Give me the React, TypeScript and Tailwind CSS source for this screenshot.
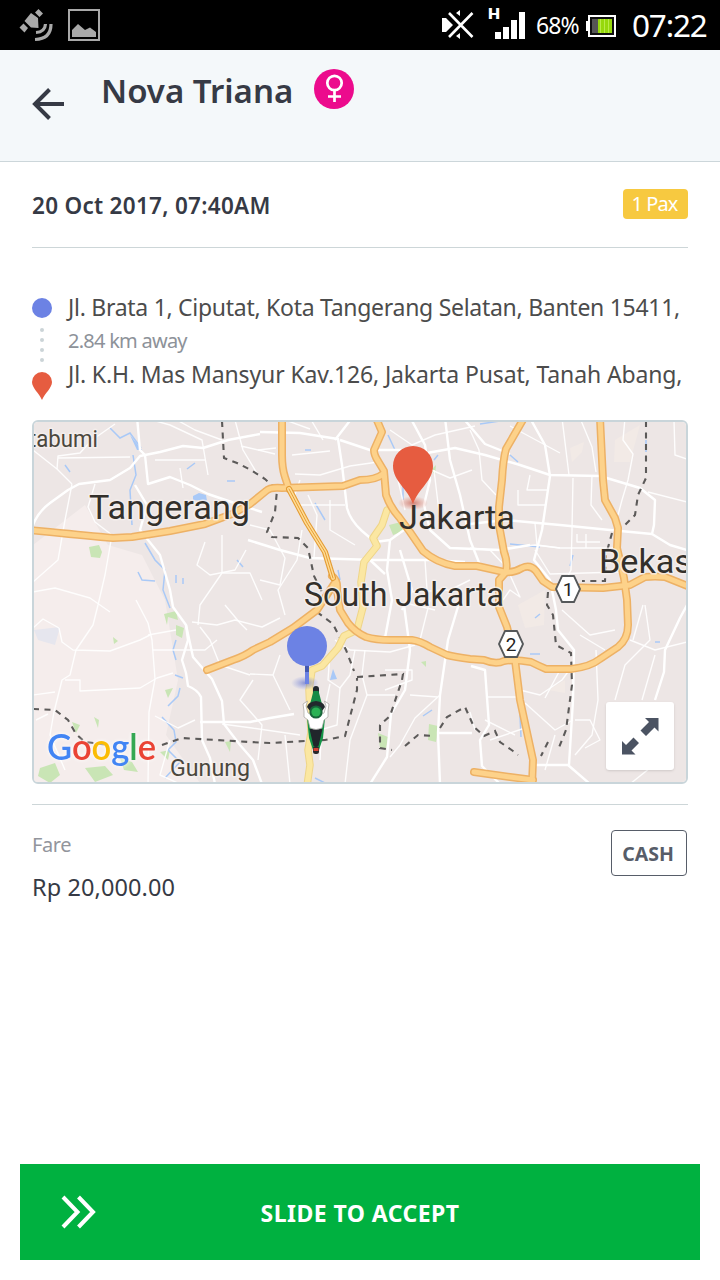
import React from "react";

const highways = [
  "M30 530 L50 532 Q90 536 113 538 L132 537 L170 531 L205 524 L232 514 L250 504 L266 491 Q270 487 282 488 L343 486 L360 480 Q376 480 383 474",
  "M282 418 V455 Q282 468 285 477 L289 489",
  "M207 670 L233 660 Q245 656 253 650 L270 642 L293 628 L317 610 L334 584",
  "M332 576 Q338 580 337 590 L340 610 L348 623 Q355 632 366 637 Q376 640 390 640 H412 Q420 641 430 647 L447 655 Q455 657 470 659 L484 660 Q496 665 504 661 Q515 659 531 662 Q539 666 546 669 H571 Q590 667 600 659 L618 647 Q628 639 628 625 L627 600 L624 578 L617 548 L618 528 L615 518 L605 500 L603 480 L600 418",
  "M376 418 L382 432 L374 450 Q374 455 378 461 L384 471 L386 495 Q390 507 399 517 L410 532 L423 551 Q437 563 455 566 L477 566 L504 572 Q514 573 522 568 Q530 564 536 571 L543 581 L552 587 L603 588 L630 585 L645 577 Q655 576 665 577 L690 587",
  "M524 418 L506 449 Q503 460 502 480 L499 507 L499 525 L504 552 Q508 562 506 572 L499 580 L499 607 L507 627 L515 660 L520 700 L533 760 L532 785",
  "M474 772 L510 777 L533 780",
];

const mainRoads = [
  "M33 525 Q38 512 50 503 L68 490 L79 484 L110 480 L130 468 L140 456 L160 452 L183 446 L203 448 L228 440 L260 434",
  "M137 417 L140 450 L145 455 L148 484 L170 477 L190 485 L208 494 L240 505 L262 512",
  "M135 485 L147 505 L140 530 L160 555 L170 590 L173 607 L186 625 L188 640 L182 660 L186 673 L188 686 Q198 690 201 697 L202 740 L210 758 L215 784",
  "M186 625 L193 657 L212 679 L222 701 L224 724 L240 745 L253 760 L262 784",
  "M200 722 H250 L270 718 L294 714",
  "M260 432 L300 433 L338 439 L342 465 L347 508 Q350 520 362 531 L375 542 L390 540 L404 530",
  "M248 540 L280 550 L310 558 L374 560 H430 L465 562",
  "M352 418 L335 440 M340 440 L370 450 H406",
  "M410 417 L425 445 L430 480 L424 505 L430 530 L450 548 L500 550 L530 545",
  "M410 456 L455 448 L485 455 L520 465 L550 475 L600 476 L640 488 L655 500 L654 525 L652 534 L670 545 L687 550",
  "M470 524 L505 520 L560 525 L610 530 L652 534",
  "M445 418 L450 460 L460 495 L470 540 L480 565",
  "M463 418 L485 444 L510 454",
  "M530 418 L545 445 L550 476 L542 530 L534 560 L550 580 L556 610 L558 630 L574 650 L573 700 L569 765",
  "M460 600 L448 640 L440 695 L438 733 L440 784",
  "M687 605 L680 618 L665 650 L664 672 L655 700",
  "M438 733 H472",
  "M390 540 L387 570 L392 600 L385 638",
  "M404 605 L410 650 L405 690 L391 714 L387 757 L370 784",
  "M471 666 L485 670 L489 725 L480 740 L482 766 L500 784",
  "M533 765 H568 L590 784",
  "M370 560 L385 574 M400 550 L412 590 L402 610",
];

const minorRoads = [
  "M33 450 L57 469 L72 484 M72 484 L65 520 L58 560 L33 582",
  "M33 592 L55 588 L90 598 L110 612",
  "M57 469 L58 456 L80 453 L92 440 L115 424 M58 458 L130 457",
  "M95 484 L88 507 L95 522 L112 535 L105 575 L98 605",
  "M145 418 L170 425 L202 440 L208 475 M155 460 H205 M180 468 L183 488",
  "M177 420 L195 430 L222 440",
  "M205 542 L197 565 L210 575 L235 570 L246 550",
  "M222 535 V573 L200 605 L198 625 M222 573 H250 L262 600",
  "M98 605 L93 625 L76 650 L70 675 L62 680 L54 712 L50 735 L65 770",
  "M33 628 L43 619 L59 628 L62 642 L73 650 L110 651 L140 640 L150 635",
  "M136 600 L148 623 L152 640 L155 679 L149 712 L148 784",
  "M65 680 H80 V691 L140 688 L157 678 L173 673",
  "M33 695 L55 692 M36 720 L48 714",
  "M153 650 L205 650 L217 640 M148 635 L176 630",
  "M200 627 L210 640 L220 665 L250 675",
  "M192 622 L217 625 L235 620 L262 627 L280 618",
  "M225 605 L240 623 L247 630",
  "M235 420 L243 450 L258 475 M241 446 L275 454",
  "M258 450 L276 448 M292 455 L330 451 M295 474 L320 475 L350 466 L378 462",
  "M293 500 L300 480 M295 505 H345 M308 495 L317 515 L314 557",
  "M330 500 L330 530 L355 545",
  "M302 530 L297 560 L278 590 L285 615",
  "M250 525 L270 530 L285 558 L280 585 L260 580",
  "M310 418 L323 440 M288 421 L310 429",
  "M390 430 L412 445 L435 435 L475 426",
  "M403 455 L398 480 L405 510 M420 465 L450 478 L472 470",
  "M470 430 L479 450 L482 480 L496 495 M434 470 L440 520",
  "M510 426 L560 453 M562 418 L569 475 M580 418 L592 447 L596 472",
  "M625 418 L623 440 L633 454 L628 480 L622 500 L618 515",
  "M674 420 L675 455 L687 459 M648 492 L687 502",
  "M573 478 L572 530 L571 570 L565 582 M530 475 L527 490 H547 M518 490 V505 H546",
  "M592 475 L591 505 L602 520 M535 523 L537 545 L560 548 H615",
  "M577 534 V542 H600 M586 534 V548",
  "M507 548 L535 545 L560 548 M507 568 L490 550 L470 548",
  "M535 550 L550 574 L620 572",
  "M510 575 L520 597 L510 590 L503 600",
  "M410 592 L450 590 L470 580 M425 560 L427 590",
  "M405 603 L435 610 M430 600 L420 640",
  "M335 640 L350 650 L390 652 L415 645",
  "M330 652 L328 680 L340 688 L350 675 L355 650",
  "M365 650 L362 675 L367 695 L350 740 L345 784",
  "M367 695 H395 M385 670 H412 V680 L385 690",
  "M440 695 L415 718 L400 745 L390 757 M438 697 L410 695",
  "M250 674 L273 675 L290 710 M273 675 L280 655",
  "M222 724 L252 728 L300 735 M285 735 L290 784",
  "M253 680 L240 700 L262 725 L258 760",
  "M330 684 L322 720 L320 760 M340 688 L337 725 L310 733",
  "M562 610 L590 635 L615 630 M580 635 L605 650",
  "M630 640 L655 650 L687 642 M645 605 L650 640 L625 665 L615 700",
  "M596 650 L598 700 L592 735 L575 755",
  "M520 690 L540 695 L562 680 L573 665 M525 703 L555 730 L573 720",
  "M487 697 H518 M485 720 L515 735 M490 740 L525 728",
  "M575 720 L590 720 L600 740 L585 748",
  "M555 735 L545 770 M560 670 L545 698",
  "M643 605 L633 640 M655 655 L642 700",
  "M630 784 L660 760 M470 712 L475 730",
  "M155 716 L178 728 L195 720 M170 740 L160 775 L180 784",
];

const borders = [
  "M222 421 L224 458 L237 463 L251 470 L265 479 L277 490 L275 512 L267 532 L272 537 L298 538 L308 548 L314 576 L322 592",
  "M33 709 L55 710 L68 720 L76 734 L85 742 L110 745",
  "M162 745 L182 738 L250 742 L270 743 L305 741 L325 740 L345 736 L351 713 L357 690 L357 678",
  "M317 612 L333 624 L346 650 L354 671 M357 677 L403 674 L402 680 L390 716 L380 725 L380 748 L392 750",
  "M405 746 L418 735 L435 736 M440 728 L447 717 L465 707 L474 727 L484 736 L495 731 L500 742 L513 751 L518 755",
  "M646 421 V478 L638 495 L635 515 L623 527 M612 533 L606 555 L605 581 H582",
  "M548 592 L547 605 L553 615 L556 645 L571 653 L572 685 L566 730 L558 750 M548 742 L541 756",
];

const rivers = [
  "M110 428 L120 438 L130 433 L141 448 M133 455 L136 475 L130 490 L132 525",
  "M145 543 L155 560 L165 570 L163 590 L170 608",
  "M176 640 L173 650 L176 660 M175 675 L183 678 M180 688 L178 696 L168 706 M162 717 L174 730 L176 742 L168 750 L180 762 L165 778",
  "M388 435 L395 450 M403 485 V500 M510 455 L518 462 M480 424 L500 421",
  "M646 440 V452 M510 544 L540 547 M573 555 L570 566",
  "M138 572 L142 580 L155 581 M65 465 L70 472 M195 463 L187 469 M227 481 H235 M237 560 L243 567",
  "M423 716 L432 710 M530 654 H540 M535 618 L540 614 M655 642 H660",
  "M176 575 V583 M183 578 V584 M315 778 L325 783 M520 715 L521 737",
  "M305 450 H311 M315 503 L325 520 M338 570 L340 580 M370 450 L378 448 M434 460 L438 455",
];

const parks = [
  "M89 547 L99 545 L102 552 L100 558 L91 557Z",
  "M164 614 L176 611 L178 620 L168 617 L167 625Z",
  "M176 625 L184 628 L182 638 L176 635Z",
  "M389 525 L401 522 L404 531 L393 535Z",
  "M431 470 L436 465 L435 475Z",
  "M378 733 L388 737 L386 748 L380 748Z",
  "M429 724 L438 726 L436 742 L428 740Z",
  "M113 637 L118 641 L114 644Z",
  "M40 768 L55 763 L60 775 L50 783 L38 776Z",
  "M85 768 L105 766 L113 775 L95 782Z",
  "M72 722 L80 725 L76 733Z",
  "M94 717 L99 720 L98 728Z",
  "M160 752 L170 750 L168 760Z",
  "M120 758 L132 762 L138 772 L124 770Z",
  "M165 690 L173 688 L168 698Z",
  "M225 742 L231 741 L230 752Z",
  "M421 662 L426 661 L426 667Z",
];

const yellowRoad =
  "M387 510 L382 525 L373 538 L377 546 L364 562 L361 582 L363 607 L357 630 L344 636 L338 648 L322 666 L312 670 L309 690 L311 733 L308 750 L310 765 L307 786";
const toll = "M289 489 L307 523 L325 552 L333 578";

function MapView() {
  return (
    <svg className="block h-full w-full" viewBox="34 422 652 360" preserveAspectRatio="none" fontFamily="Roboto, sans-serif">
      <defs>
        <radialGradient id="redShade">
          <stop offset="0" stopColor="#b8402e" stopOpacity=".6" />
          <stop offset="1" stopColor="#e65c40" stopOpacity="0" />
        </radialGradient>
        <radialGradient id="blueShade">
          <stop offset="0" stopColor="#5868c8" stopOpacity=".65" />
          <stop offset="1" stopColor="#6c82e4" stopOpacity="0" />
        </radialGradient>
      </defs>
      <path d="M33 421 H687 V783 H33Z" fill="#ede6e5" />
      <path d="M33 545 L85 505 L108 545 L142 555 L165 600 L178 680 L166 735 L200 783 H33Z" fill="#f5edec" />
      <path d="M615 440 L640 425 L630 462 L614 462Z M570 448 L584 442 L582 452 L572 462Z M518 605 L545 590 L544 625 L525 628Z M548 690 L565 680 L565 693Z" fill="#f2eae6" />
      <path d="M34 630 L60 627 L55 645 L38 640Z" fill="#e6e6ee" />
      <g fill="#c9e5b5">{parks.map((d) => <path key={d} d={d} />)}</g>
      <g fill="none" stroke="#a9c9f7" strokeWidth="1.5">{rivers.map((d) => <path key={d} d={d} />)}</g>
      <path d="M193 496 L199 493 L206 495 L207 501 L193 500Z M330 680 L333 669 L337 679Z M130 435 L142 450 L137 450Z" fill="#a9c9f7" />
      <g fill="none" stroke="#fff" strokeLinejoin="round">
        <g strokeWidth="1.4" strokeOpacity=".9">{minorRoads.map((d) => <path key={d} d={d} />)}</g>
        <g strokeWidth="2.4">{mainRoads.map((d) => <path key={d} d={d} />)}</g>
      </g>
      <g fill="none" stroke="#5c5a59" strokeWidth="2.1" strokeDasharray="6 5.500">{borders.map((d) => <path key={d} d={d} />)}</g>
      <g fill="none" strokeLinejoin="round" strokeLinecap="round">
        <path d={yellowRoad} stroke="#efd588" strokeWidth="7.5" />
        <path d={yellowRoad} stroke="#fbe7a2" strokeWidth="5.5" />
        <g stroke="#edb165" strokeWidth="8">{highways.map((d) => <path key={d} d={d} />)}</g>
        <g stroke="#fdd28a" strokeWidth="5">{highways.map((d) => <path key={d} d={d} />)}</g>
        <path d={toll} stroke="#e49c35" strokeWidth="6" />
        <path d={toll} stroke="#ffdc95" strokeWidth="3.8" />
        <path d={toll} stroke="#e49c35" strokeWidth="1" />
      </g>
      <g fill="#33302b" stroke="#f6f1ef" strokeWidth="3" strokeOpacity=".8" paintOrder="stroke" strokeLinejoin="round">
        <g fontSize="34">
          <text x="89" y="519" textLength="161" lengthAdjust="spacingAndGlyphs">Tangerang</text>
          <text x="304" y="606" textLength="200" lengthAdjust="spacingAndGlyphs">South Jakarta</text>
          <text x="599" y="573" textLength="93" lengthAdjust="spacingAndGlyphs">Bekas</text>
        </g>
        <g fontSize="24" fill="#4b473d">
          <text x="29" y="447" textLength="69" lengthAdjust="spacingAndGlyphs">tabumi</text>
          <text x="170" y="776" textLength="80" lengthAdjust="spacingAndGlyphs">Gunung</text>
        </g>
      </g>
      <ellipse cx="413" cy="503" rx="15" ry="7" fill="url(#redShade)" />
      <path d="M413 504 C408 489 393 481 393 466 A20 20 0 0 1 433 466 C433 481 418 489 413 504Z" fill="#e65c40" />
      <text x="399" y="529" fontSize="34" textLength="116" lengthAdjust="spacingAndGlyphs" fill="#33302b">Jakarta</text>
      {[{ x: 568, y: 589, n: "1" }, { x: 511, y: 644, n: "2" }].map((s) => (
        <g key={s.n} transform={`translate(${s.x} ${s.y})`}>
          <path d="M-12 0 L-6 -13 H6 L12 0 L6 13 H-6Z" fill="#fff" stroke="#55585a" strokeWidth="1.8" strokeLinejoin="round" />
          <text y="7" fontSize="19" textAnchor="middle" fill="#222">{s.n}</text>
        </g>
      ))}
      <ellipse cx="305" cy="683" rx="14" ry="7" fill="url(#blueShade)" />
      <path d="M307 660 V684" stroke="#6c82e4" strokeWidth="4" />
      <path d="M307 665 V672" stroke="#4358ae" strokeWidth="4" />
      <circle cx="307" cy="646" r="20" fill="#6c82e4" />
      <g>
        <rect x="313" y="686" width="6" height="14" rx="3" fill="#22282d" />
        <path d="M313.500 691 H318.500 L322 704 H310Z" fill="#168a45" />
        <path d="M307 707 Q308 702 316 701 Q324 702 325 707 L322 711 H310Z" fill="#22282d" />
        <path d="M307 718 L309 738 L313 750 H319 L323 738 L325 718Z" fill="#149447" />
        <path d="M309.500 729 L313.500 746 H318.500 L322.500 729Z" fill="#20262b" />
        <rect x="313" y="746" width="6" height="8" rx="2.500" fill="#28282b" />
        <path d="M313.500 748 H318.500 V751 H313.500Z" fill="#d24234" />
        <path d="M307.500 701 L303 704 L304 711 L304 717 L308 720 L310 728 Q316 731 322 728 L324 720 L328 717 L328 711 L329 704 L324.500 701 L326 706 L324 713 L320 715 H312 L308 713 L306 706Z" fill="#fff" stroke="#a5a09e" strokeWidth=".7" />
        <circle cx="316" cy="712" r="6.6" fill="#17653a" />
        <circle cx="316" cy="712" r="4.6" fill="#2ab254" />
      </g>
      <text className="drop-shadow-[0_0_2px_#fff]" x="47" y="760" fontFamily="Lato, sans-serif" fontWeight="600" fontSize="37" textLength="109" lengthAdjust="spacingAndGlyphs">
        <tspan fill="#4285f4">G</tspan><tspan fill="#ea4335">o</tspan><tspan fill="#fbbc05">o</tspan><tspan fill="#4285f4">g</tspan><tspan fill="#34a853">l</tspan><tspan fill="#ea4335">e</tspan>
      </text>
    </svg>
  );
}

function StatusBar() {
  return (
    <div className="flex h-[50px] items-center bg-black pl-[19px] text-white">
      <svg className="h-[36px] w-[34px] shrink-0" viewBox="19 7 34 36" fill="#a9a9a9">
        <path d="M38.500 9 L43 13.500 L39.500 17 L35 12.500Z M31 13 L38 18 L38.500 28 L31 27.500 L24.500 21Z M23.500 23.500 L28 28 L24.500 32.500 L19.500 27.500Z" />
        <path d="M36 32.500 Q45 32 45.500 24 M35 39.500 Q51 39 51 24" fill="none" stroke="#a9a9a9" strokeWidth="3.200" />
      </svg>
      <svg className="ml-[13px] h-[36px] w-[36px] shrink-0" viewBox="66 7 36 36">
        <rect x="69" y="10" width="30" height="30" fill="none" stroke="#a9a9a9" strokeWidth="2" />
        <path d="M72 37 V30 L78 24 L85 30 L90 27.500 L96 32 V37Z" fill="#a9a9a9" />
      </svg>
      <svg className="ml-[339px] h-[36px] w-[34px] shrink-0" viewBox="441 7 34 36">
        <path d="M442 18 H446 L453 25 L446 32 H442Z M456 13 L460 10 V16Z M456 36 L460 33 V39Z" fill="#fff" />
        <path d="M449 13 L472.500 37 M472.500 13 L449 37" stroke="#fff" strokeWidth="2.600" />
      </svg>
      <svg className="ml-[12px] h-[36px] w-[40px] shrink-0" viewBox="487 7 40 36">
        <path d="M495 39 V32 H501 V39Z M503 39 V27 H509 V39Z M511 39 V20 H517 V39Z M519 39 V12 H525 V39Z" fill="#fff" />
        <text x="488" y="19" fontSize="14" fontWeight="900" fontFamily="Roboto, sans-serif" textLength="12" lengthAdjust="spacingAndGlyphs" fill="#fff">H</text>
      </svg>
      <span className="ml-[9px] mt-px w-[44px] whitespace-nowrap text-[23px] leading-[49px] tracking-[-0.9px]">68%</span>
      <svg className="ml-[6px] mt-[2px] h-[24px] w-[30px] shrink-0" viewBox="586 14 30 24">
        <rect x="589" y="16" width="26" height="20" fill="#101010" stroke="#fff" strokeWidth="2" />
        <path d="M586 21 H588 V31 H586Z" fill="#fff" />
        <path d="M592 19 H598 V33 H592Z" fill="#555" />
        <path d="M598 19 H612 V33 H598Z" fill="#96d80c" />
        <path d="M600.500 19 V33 M604.500 19 V33 M608.500 19 V33" stroke="#b9ec4a" strokeWidth="1" />
      </svg>
      <span className="ml-[16px] w-[77px] whitespace-nowrap text-[31.5px] leading-[50px] tracking-[-1.2px]">07:22</span>
    </div>
  );
}

export default function App() {
  return (
    <div className="flex h-[1280px] w-[720px] flex-col overflow-hidden bg-white font-['Noto_Sans',sans-serif] text-[#363a45]">
      <StatusBar />
      <header className="flex h-[112px] items-start border-b border-[#ccd6da] bg-[#f4f8fa]">
        <svg className="ml-[30px] mt-[36px] h-[36px] w-[36px] shrink-0" viewBox="30 86 36 36" fill="none" stroke="#363a45" strokeWidth="4">
          <path d="M64 104 H35 M49.500 89.500 L35 104 L49.500 118.500" />
        </svg>
        <h1 className="ml-[35px] mt-[17px] w-[213px] whitespace-nowrap text-[33px] font-semibold leading-[48px]">Nova Triana</h1>
        <svg className="mt-[19px] h-[40px] w-[40px] shrink-0" viewBox="0 0 40 40" fill="none" stroke="#fff" strokeWidth="2.700">
          <circle cx="20" cy="20" r="20" fill="#ec0b8d" stroke="none" />
          <circle cx="20.500" cy="14" r="7.200" />
          <path d="M20.500 21 V33 M14 27.500 H27" />
        </svg>
      </header>
      <main className="flex flex-1 flex-col px-8">
        <section className="flex h-[86px] items-center justify-between border-b border-[#cdd6d8]">
          <span className="whitespace-nowrap pt-[2px] text-[22.5px] font-semibold tracking-[0.29px]">20 Oct 2017, 07:40AM</span>
          <span className="mb-[2px] flex h-[30px] w-[65px] items-center justify-center rounded bg-[#f7c940] pr-[2px] pt-px text-[20px] tracking-[-0.9px] text-white">1 Pax</span>
        </section>
        <section className="mt-[42px] flex h-[130px]">
          <svg className="h-[112px] w-[20px] shrink-0" viewBox="32 290 20 112">
            <circle cx="42" cy="308" r="10" fill="#6c82e4" />
            <g fill="#cbd4d7">
              <circle cx="42" cy="330" r="2" />
              <circle cx="42" cy="340" r="2" />
              <circle cx="42" cy="350" r="2" />
              <circle cx="42" cy="360" r="2" />
            </g>
            <path d="M42 400 C39 393 32 388 32 382 A10 10 0 0 1 52 382 C52 388 45 393 42 400Z" fill="#e65c40" />
          </svg>
          <div className="ml-4 whitespace-nowrap text-[23px] text-[#4c4c4c]">
            <p className="leading-[34px] tracking-[-0.28px]">Jl. Brata 1, Ciputat, Kota Tangerang Selatan, Banten 15411,</p>
            <p className="text-[20px] leading-[33px] tracking-[-0.75px] text-[#8d9299]">2.84 km away</p>
            <p className="leading-[34px] tracking-[-0.13px]">Jl. K.H. Mas Mansyur Kav.126, Jakarta Pusat, Tanah Abang,</p>
          </div>
        </section>
        <section className="relative h-[364px] overflow-hidden rounded-md border-2 border-[#c9d5da]">
          <MapView />
          <button className="absolute bottom-[12px] right-[12px] flex h-[68px] w-[68px] items-center justify-center rounded-[3px] bg-white shadow">
            <svg className="h-[40px] w-[40px]" viewBox="0 0 40 40" fill="#4b5362">
              <path d="M25 2 H38.500 V15.500 L34.500 11.500 L26 20 L20.500 14.500 L29 6Z M2 25 L6 29 L13.500 21.500 L19 27 L11.500 34.500 L15.500 38.500 H2Z" />
            </svg>
          </button>
        </section>
        <section className="mt-[20px] flex justify-between border-t border-[#cdd6d8]">
          <div className="whitespace-nowrap pt-[19px]">
            <p className="text-[20px] leading-[42px] tracking-[-0.4px] text-[#92959c]">Fare</p>
            <p className="text-[23.5px] leading-[42px] tracking-[0.1px]">Rp 20,000.00</p>
          </div>
          <span className="mr-px mt-[25px] flex h-[46px] w-[76px] items-center justify-center rounded border border-[#575d69] pr-[2px] pt-[2px] text-[19.5px] font-bold text-[#575d69]">CASH</span>
        </section>
      </main>
      <button className="relative mx-5 mb-5 flex h-[96px] items-center justify-center bg-[#00b140] pt-[2px] text-[23px] font-bold tracking-[0.45px] text-white">
        <svg className="absolute left-[40px] top-[30px] h-[36px] w-[36px]" viewBox="60 1194 36 36" fill="none" stroke="#fff" strokeWidth="4">
          <path d="M63 1197 L77.500 1212 L63 1227 M78.500 1197 L93 1212 L78.500 1227" />
        </svg>
        <span className="whitespace-nowrap">SLIDE TO ACCEPT</span>
      </button>
    </div>
  );
}
